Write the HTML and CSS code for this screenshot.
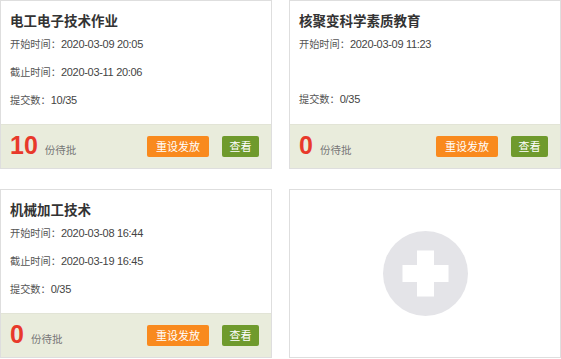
FILE: index.html
```html
<!DOCTYPE html>
<html lang="zh">
<head>
<meta charset="utf-8">
<link rel="stylesheet" href="styles.css">
</head>
<body>
<div class="grid">
  <div class="card">
    <div class="info">
      <div class="title">电工电子技术作业</div>
      <div class="line">开始时间：<span class="val">2020-03-09 20:05</span></div>
      <div class="line">截止时间：<span class="val">2020-03-11 20:06</span></div>
      <div class="line">提交数：<span class="val">10/35</span></div>
    </div>
    <div class="foot">
      <div class="pending"><span class="num">10</span><span class="unit">份待批</span></div>
      <div class="btns"><span class="btn orange">重设发放</span><span class="btn green">查看</span></div>
    </div>
  </div>
  <div class="card">
    <div class="info">
      <div class="title">核聚变科学素质教育</div>
      <div class="line">开始时间：<span class="val">2020-03-09 11:23</span></div>
      <div class="line">&nbsp;</div>
      <div class="line">提交数：<span class="val">0/35</span></div>
    </div>
    <div class="foot">
      <div class="pending"><span class="num">0</span><span class="unit">份待批</span></div>
      <div class="btns"><span class="btn orange">重设发放</span><span class="btn green">查看</span></div>
    </div>
  </div>
  <div class="card">
    <div class="info">
      <div class="title">机械加工技术</div>
      <div class="line">开始时间：<span class="val">2020-03-08 16:44</span></div>
      <div class="line">截止时间：<span class="val">2020-03-19 16:45</span></div>
      <div class="line">提交数：<span class="val">0/35</span></div>
    </div>
    <div class="foot">
      <div class="pending"><span class="num">0</span><span class="unit">份待批</span></div>
      <div class="btns"><span class="btn orange">重设发放</span><span class="btn green">查看</span></div>
    </div>
  </div>
  <div class="card add">
    <div class="plus-circle">
      <svg width="85" height="85" viewBox="0 0 85 85">
        <circle cx="42.5" cy="42.5" r="42.5" fill="#e4e4e8"/>
        <rect x="19.5" y="34" width="46" height="17" fill="#fff"/>
        <rect x="34" y="19.5" width="17" height="46" fill="#fff"/>
      </svg>
    </div>
  </div>
</div>
</body>
</html>
```

FILE: styles.css
```css
html, body {
  margin: 0;
  padding: 0;
  background: #fff;
}
body {
  font-family: "Noto Sans CJK SC", "Liberation Sans", sans-serif;
  color: #555;
}
.grid {
  display: grid;
  grid-template-columns: 272px 272px;
  grid-template-rows: 169px 169px;
  column-gap: 17px;
  row-gap: 20px;
}
.card {
  box-sizing: border-box;
  border: 1px solid #dedede;
  display: flex;
  flex-direction: column;
  background: #fff;
}
.info {
  flex: 1;
  padding: 9px 10px 0 9px;
}
.title {
  font-size: 13.5px;
  font-weight: bold;
  color: #333;
  line-height: 20px;
}
.line {
  font-size: 10.2px;
  line-height: 27px;
  color: #555;
  white-space: nowrap;
}
.val {
  font-family: "Liberation Sans", "Noto Sans CJK SC", sans-serif;
  font-size: 11px;
  letter-spacing: -0.3px;
  color: #444;
}
.foot {
  height: 44px;
  background: #e9ecdc;
  border-top: 1px solid #e2e4d6;
  box-sizing: border-box;
  display: flex;
  align-items: center;
  padding: 0 12px 0 9px;
}
.pending {
  display: flex;
  align-items: baseline;
  gap: 7px;
  padding-bottom: 4px;
}
.num {
  font-family: "Liberation Sans", sans-serif;
  font-weight: bold;
  font-size: 25px;
  line-height: 28px;
  color: #e8392b;
}
.unit {
  font-size: 10.5px;
  color: #777;
}
.btns {
  margin-left: auto;
  display: flex;
  gap: 13px;
}
.btn {
  height: 21px;
  line-height: 21px;
  font-size: 11px;
  color: #fff;
  border-radius: 2px;
  text-align: center;
}
.orange {
  width: 62px;
  background: #f98a1e;
}
.green {
  width: 37px;
  background: #6f9a2d;
}
.add {
  align-items: center;
  justify-content: center;
}
.plus-circle {
  width: 85px;
  height: 85px;
  display: flex;
}
```
